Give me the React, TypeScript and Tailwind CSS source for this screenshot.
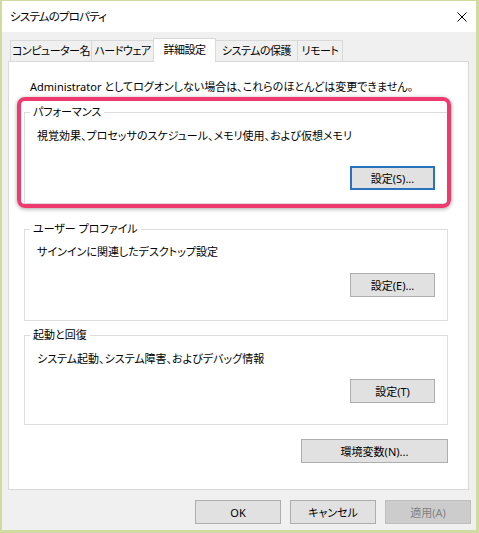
function Btn({ label, focused, disabled, className }: { label: string; focused?: boolean; disabled?: boolean; className?: string }) {
  const base = "flex items-center justify-center h-[24px] leading-none whitespace-nowrap";
  const look = disabled
    ? "bg-[#cccccc] border border-[#bfbfbf] text-[#838383]"
    : focused
      ? "bg-[#e1e1e1] border-2 border-[#2a72c0] text-black"
      : "bg-[#e1e1e1] border border-[#adadad] text-black";
  return <div className={`${base} ${look} ${className ?? ""}`}>{label}</div>;
}

export default function App() {
  return (
    <div className="w-[479px] h-[533px] flex flex-col bg-[#f0f0f0] border-t border-l-2 border-r-[3px] border-b-[3px] border-[#cfdb9f] text-black text-[11px] [font-family:'Noto_Sans','Noto_Sans_CJK_JP',sans-serif] [font-feature-settings:'palt']">
      {/* title bar */}
      <div className="h-[31px] bg-white flex items-center justify-between pl-[8px] pr-[8px]">
        <span className="leading-none text-[11.5px] tracking-[-0.8px]">システムのプロパティ</span>
        <svg width="10" height="10" viewBox="0 0 10 10" className="mr-[1px]">
          <path d="M0.5 0.5 L9.5 9.5 M9.5 0.5 L0.5 9.5" stroke="#000" strokeWidth="1" fill="none" />
        </svg>
      </div>

      <div className="flex flex-col pl-[6px] pr-[7px]">
        {/* tabs */}
        <div className="flex items-end h-[29px] pl-[2px] whitespace-nowrap tracking-[-0.5px]">
          <div className="w-[82px] h-[21px] flex items-center justify-center pt-[1px] border border-b-0 border-[#d9d9d9] bg-[#f0f0f0]">コンピューター名</div>
          <div className="w-[63px] h-[21px] -ml-px flex items-center justify-center pt-[1px] border border-b-0 border-[#d9d9d9] bg-[#f0f0f0]">ハードウェア</div>
          <div className="w-[63px] h-[24px] -ml-px -mb-px z-10 flex items-center justify-center pb-[1px] border border-b-0 border-[#d9d9d9] bg-white">詳細設定</div>
          <div className="w-[83px] h-[21px] -ml-px flex items-center justify-center pt-[1px] border border-b-0 border-[#d9d9d9] bg-[#f0f0f0]">システムの保護</div>
          <div className="w-[46px] h-[21px] -ml-px flex items-center justify-center pt-[1px] border border-b-0 border-[#d9d9d9] bg-[#f0f0f0]">リモート</div>
        </div>

        {/* panel */}
        <div className="h-[429px] bg-white border border-[#d9d9d9] flex flex-col pl-[15px] pr-[20px]">
          <p className="mt-[17px] ml-[6px] leading-[16px]">Administrator としてログオンしない場合は、これらのほとんどは変更できません。</p>

          <div className="relative mt-[9px]">
            <fieldset className="border border-[#dcdcdc] px-[12px] pb-[13px] flex flex-col">
              <legend className="-ml-[7px] px-[3px] leading-[16px]">パフォーマンス</legend>
              <p className="mt-[8px] leading-[16px]">視覚効果、プロセッサのスケジュール、メモリ使用、および仮想メモリ</p>
              <div className="flex justify-end mt-[22px]">
                <Btn label="設定(S)..." focused className="w-[85px]" />
              </div>
            </fieldset>
            <div className="absolute -left-[7px] -right-[3px] -top-[7px] -bottom-[4px] rounded-[8px] border-4 border-[#ef3a70] shadow-[0_1px_4px_rgba(0,0,0,0.35)] pointer-events-none" />
          </div>

          <fieldset className="mt-[17px] border border-[#dcdcdc] px-[12px] pb-[23px] flex flex-col">
            <legend className="-ml-[7px] px-[3px] leading-[16px]">ユーザー プロファイル</legend>
            <p className="mt-[7px] leading-[16px]">サインインに関連したデスクトップ設定</p>
            <div className="flex justify-end mt-[13px]">
              <Btn label="設定(E)..." className="w-[85px]" />
            </div>
          </fieldset>

          <fieldset className="mt-[6px] border border-[#dcdcdc] px-[12px] pb-[21px] flex flex-col">
            <legend className="-ml-[7px] px-[3px] leading-[16px]">起動と回復</legend>
            <p className="mt-[8px] leading-[16px]">システム起動、システム障害、およびデバッグ情報</p>
            <div className="flex justify-end mt-[12px]">
              <Btn label="設定(T)" className="w-[85px]" />
            </div>
          </fieldset>

          <div className="flex justify-end mt-[14px]">
            <Btn label="環境変数(N)..." className="w-[147px]" />
          </div>
        </div>
      </div>

      {/* dialog buttons */}
      <div className="flex justify-end gap-[9px] mt-[10px] pr-[5px]">
        <Btn label="OK" className="w-[86px]" />
        <Btn label="キャンセル" className="w-[86px]" />
        <Btn label="適用(A)" disabled className="w-[86px]" />
      </div>
    </div>
  );
}
